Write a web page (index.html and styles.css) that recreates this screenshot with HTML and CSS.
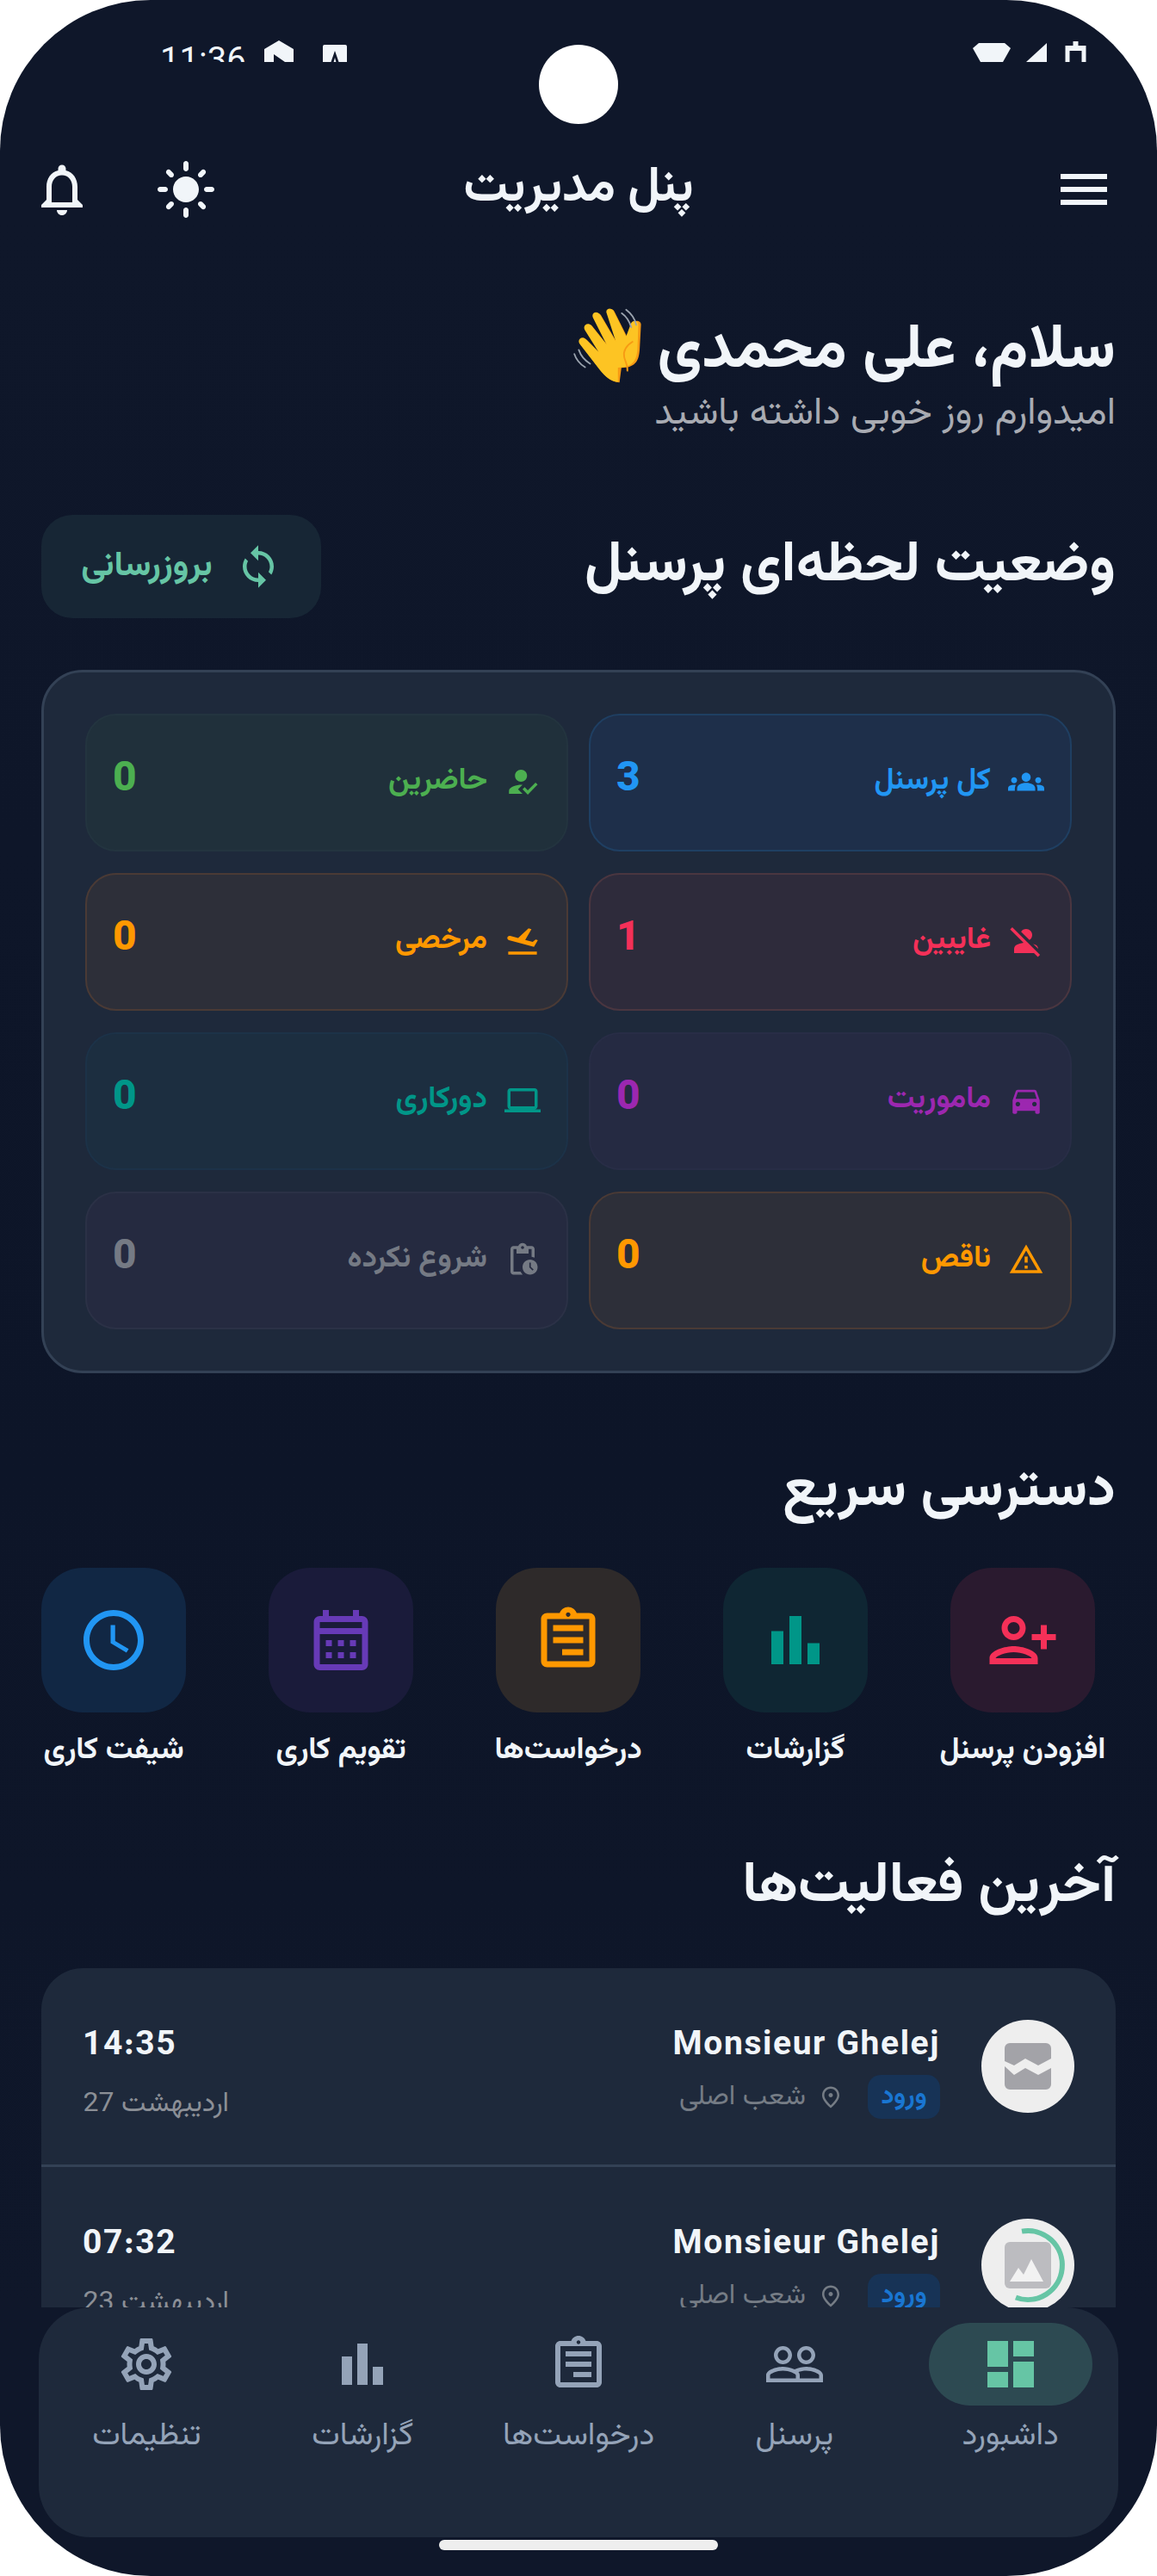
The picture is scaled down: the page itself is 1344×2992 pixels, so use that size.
FILE: index.html
```html
<!DOCTYPE html>
<html lang="fa" dir="rtl">
<head>
  <meta charset="UTF-8" />
  <title>پنل مدیریت</title>
  <link rel="stylesheet" href="styles.css">
</head>
<body>

<svg class="sprite" xmlns="http://www.w3.org/2000/svg">
  <symbol id="i-bell" viewBox="0 0 24 24"><path d="M12 22c1.1 0 2-.9 2-2h-4c0 1.1.89 2 2 2zm6-6v-5c0-3.07-1.64-5.64-4.5-6.32V4c0-.83-.67-1.5-1.5-1.5s-1.5.67-1.5 1.5v.68C7.63 5.36 6 7.92 6 11v5l-2 2v1h16v-1l-2-2zm-2 1H8v-6c0-2.48 1.51-4.5 4-4.5s4 2.02 4 4.5v6z"/></symbol>
  <symbol id="i-sun" viewBox="0 0 24 24"><path d="M12 7c-2.76 0-5 2.24-5 5s2.24 5 5 5 5-2.24 5-5-2.24-5-5-5zM2 13h2c.55 0 1-.45 1-1s-.45-1-1-1H2c-.55 0-1 .45-1 1s.45 1 1 1zm18 0h2c.55 0 1-.45 1-1s-.45-1-1-1h-2c-.55 0-1 .45-1 1s.45 1 1 1zM11 2v2c0 .55.45 1 1 1s1-.45 1-1V2c0-.55-.45-1-1-1s-1 .45-1 1zm0 18v2c0 .55.45 1 1 1s1-.45 1-1v-2c0-.55-.45-1-1-1s-1 .45-1 1zM5.99 4.58c-.39-.39-1.03-.39-1.41 0-.39.39-.39 1.03 0 1.41l1.06 1.06c.39.39 1.03.39 1.41 0s.39-1.03 0-1.41L5.99 4.58zm12.37 12.37c-.39-.39-1.03-.39-1.41 0-.39.39-.39 1.03 0 1.41l1.06 1.06c.39.39 1.03.39 1.41 0 .39-.39.39-1.03 0-1.41l-1.06-1.06zm1.06-10.96c.39-.39.39-1.03 0-1.41-.39-.39-1.03-.39-1.41 0l-1.06 1.06c-.39.39-.39 1.03 0 1.41s1.03.39 1.41 0l1.06-1.06zM7.05 18.36c.39-.39.39-1.03 0-1.41-.39-.39-1.03-.39-1.41 0l-1.06 1.06c-.39.39-.39 1.03 0 1.41s1.03.39 1.41 0l1.06-1.06z"/></symbol>
  <symbol id="i-menu" viewBox="0 0 24 24"><path d="M3 18h18v-2H3v2zm0-5h18v-2H3v2zm0-7v2h18V6H3z"/></symbol>
  <symbol id="i-sync" viewBox="0 0 24 24"><path d="M12 4V1L8 5l4 4V6c3.31 0 6 2.69 6 6 0 1.01-.25 1.97-.7 2.8l1.46 1.46C19.54 15.03 20 13.57 20 12c0-4.42-3.58-8-8-8zm0 14c-3.31 0-6-2.69-6-6 0-1.01.25-1.97.7-2.8L5.24 7.74C4.46 8.97 4 10.43 4 12c0 4.42 3.58 8 8 8v3l4-4-4-4v3z"/></symbol>
  <symbol id="i-groups" viewBox="0 0 24 24"><path d="M12 12.75c1.63 0 3.07.39 4.24.9 1.08.48 1.76 1.56 1.76 2.73V18H6v-1.61c0-1.18.68-2.26 1.76-2.73 1.17-.52 2.61-.91 4.24-.91zM4 13c1.1 0 2-.9 2-2s-.9-2-2-2-2 .9-2 2 .9 2 2 2zm1.13 1.1c-.37-.06-.74-.1-1.13-.1-.99 0-1.93.21-2.78.58C.48 14.9 0 15.62 0 16.43V18h4.5v-1.61c0-.83.23-1.61.63-2.29zM20 13c1.1 0 2-.9 2-2s-.9-2-2-2-2 .9-2 2 .9 2 2 2zm4 3.43c0-.81-.48-1.53-1.22-1.85-.85-.37-1.79-.58-2.78-.58-.39 0-.76.04-1.13.1.4.68.63 1.46.63 2.29V18H24v-1.57zM12 6c1.66 0 3 1.34 3 3s-1.34 3-3 3-3-1.34-3-3 1.34-3 3-3z"/></symbol>
  <symbol id="i-present" viewBox="0 0 24 24"><path d="M9 17l3-2.94c-.39-.04-.68-.06-1-.06-2.67 0-8 1.34-8 4v2h9l-3-3zm2-5c2.21 0 4-1.79 4-4s-1.79-4-4-4-4 1.79-4 4 1.79 4 4 4zm4.47 8.5L12 17l1.4-1.41 2.07 2.08 5.13-5.17 1.4 1.41z"/></symbol>
  <symbol id="i-takeoff" viewBox="0 0 24 24"><path d="M2.5 19h19v2h-19v-2zm19.57-9.36c-.21-.8-1.04-1.28-1.84-1.06L14.92 10l-6.9-6.43-1.93.51 4.14 7.17-4.97 1.33-1.97-1.54-1.45.39 2.59 4.49 16.57-4.43c.81-.23 1.28-1.05 1.07-1.85z"/></symbol>
  <symbol id="i-person-off" viewBox="0 0 24 24"><path d="M8.65 5.82C9.36 4.72 10.6 4 12 4c2.21 0 4 1.79 4 4 0 1.4-.72 2.64-1.82 3.35L8.65 5.82zM20 17.17c-.02-1.1-.63-2.11-1.61-2.62-.54-.28-1.13-.54-1.77-.76L20 17.17zm1.19 4.02L2.81 2.81 1.39 4.22l8.89 8.89c-1.81.23-3.39.79-4.67 1.45C4.61 15.07 4 16.1 4 17.22V20h13.17l2.61 2.61 1.41-1.42z"/></symbol>
  <symbol id="i-car" viewBox="0 0 24 24"><path d="M18.92 6.01C18.72 5.42 18.16 5 17.5 5h-11c-.66 0-1.21.42-1.42 1.01L3 12v8c0 .55.45 1 1 1h1c.55 0 1-.45 1-1v-1h12v1c0 .55.45 1 1 1h1c.55 0 1-.45 1-1v-8l-2.08-5.99zM6.5 16c-.83 0-1.5-.67-1.5-1.5S5.67 13 6.5 13s1.5.67 1.5 1.5S7.33 16 6.5 16zm11 0c-.83 0-1.5-.67-1.5-1.5s.67-1.5 1.5-1.5 1.5.67 1.5 1.5-.67 1.5-1.5 1.5zM5 11l1.5-4.5h11L19 11H5z"/></symbol>
  <symbol id="i-laptop" viewBox="0 0 24 24"><path d="M20 18c1.1 0 1.99-.9 1.99-2L22 6c0-1.1-.9-2-2-2H4c-1.1 0-2 .9-2 2v10c0 1.1.9 2 2 2H0v2h24v-2h-4zM4 6h16v10H4V6z"/></symbol>
  <symbol id="i-warning" viewBox="0 0 24 24"><path d="M12 5.99L19.53 19H4.47L12 5.99M12 2L1 21h22L12 2zm1 14h-2v2h2v-2zm0-6h-2v4h2v-4z"/></symbol>
  <symbol id="i-pending" viewBox="0 0 24 24"><path d="M17 12c-2.76 0-5 2.24-5 5s2.24 5 5 5 5-2.24 5-5-2.24-5-5-5zm1.65 7.35L16.5 17.2V14h1v2.79l1.85 1.85-.7.71zM18 3h-3.18C14.4 1.84 13.3 1 12 1s-2.4.84-2.82 2H6c-1.1 0-2 .9-2 2v15c0 1.1.9 2 2 2h6.11c-.59-.57-1.07-1.25-1.42-2H6V5h2v3h8V5h2v5.08c.71.1 1.38.31 2 .6V5c0-1.1-.9-2-2-2zm-6 2c-.55 0-1-.45-1-1s.45-1 1-1 1 .45 1 1-.45 1-1 1z"/></symbol>
  <symbol id="i-add" viewBox="0 0 24 24"><path d="M13 8c0-2.21-1.79-4-4-4S5 5.79 5 8s1.79 4 4 4 4-1.79 4-4zm-2 0c0 1.1-.9 2-2 2s-2-.9-2-2 .9-2 2-2 2 .9 2 2zM1 18v2h16v-2c0-2.66-5.33-4-8-4s-8 1.34-8 4zm2 0c.2-.71 3.3-2 6-2 2.69 0 5.77 1.28 6 2H3zm17-3v-3h3v-2h-3V7h-2v3h-3v2h3v3h2z"/></symbol>
  <symbol id="i-bars" viewBox="0 0 24 24"><path d="M4 9h4v11H4zm6-5h4v16h-4zm6 9h4v7h-4z"/></symbol>
  <symbol id="i-assign" viewBox="0 0 24 24"><path d="M19 3h-4.18C14.4 1.84 13.3 1 12 1s-2.4.84-2.82 2H5c-1.1 0-2 .9-2 2v14c0 1.1.9 2 2 2h14c1.1 0 2-.9 2-2V5c0-1.1-.9-2-2-2zm-7-.25c.41 0 .75.34.75.75s-.34.75-.75.75-.75-.34-.75-.75.34-.75.75-.75zM19 19H5V5h14v14zM7 7h10v2H7zm0 4h10v2H7zm3 4h7v2h-7z"/></symbol>
  <symbol id="i-calendar" viewBox="0 0 24 24"><path d="M19 4h-1V2h-2v2H8V2H6v2H5c-1.1 0-1.99.9-1.99 2L3 20c0 1.1.9 2 2 2h14c1.1 0 2-.9 2-2V6c0-1.1-.9-2-2-2zm0 16H5V10h14v10zm0-12H5V6h14v2zM9 14H7v-2h2v2zm4 0h-2v-2h2v2zm4 0h-2v-2h2v2zm-8 4H7v-2h2v2zm4 0h-2v-2h2v2zm4 0h-2v-2h2v2z"/></symbol>
  <symbol id="i-clock" viewBox="0 0 24 24"><path d="M11.99 2C6.47 2 2 6.48 2 12s4.47 10 9.99 10C17.52 22 22 17.52 22 12S17.52 2 11.99 2zM12 20c-4.42 0-8-3.58-8-8s3.58-8 8-8 8 3.58 8 8-3.58 8-8 8zm.5-13H11v6l5.25 3.15.75-1.23-4.5-2.67z"/></symbol>
  <symbol id="i-dash" viewBox="0 0 24 24"><path d="M3 13h8V3H3v10zm0 8h8v-6H3v6zm10 0h8V11h-8v10zm0-18v6h8V3h-8z"/></symbol>
  <symbol id="i-people" viewBox="0 0 24 24"><path d="M16.5 13c-1.2 0-3.07.34-4.5 1-1.43-.67-3.3-1-4.5-1C5.33 13 1 14.08 1 16.25V19h22v-2.75c0-2.17-4.33-3.25-6.5-3.25zm-4 4.5h-10v-1.25c0-.54 2.56-1.75 5-1.75s5 1.21 5 1.75v1.25zm9 0H14v-1.25c0-.46-.2-.86-.52-1.22.88-.3 1.96-.53 3.02-.53 2.44 0 5 1.21 5 1.75v1.25zM7.5 12c1.93 0 3.5-1.57 3.5-3.5S9.43 5 7.5 5 4 6.57 4 8.5 5.57 12 7.5 12zm0-5.5c1.1 0 2 .9 2 2s-.9 2-2 2-2-.9-2-2 .9-2 2-2zm9 5.5c1.93 0 3.5-1.57 3.5-3.5S18.43 5 16.5 5 13 6.57 13 8.5s1.57 3.5 3.5 3.5zm0-5.5c1.1 0 2 .9 2 2s-.9 2-2 2-2-.9-2-2 .9-2 2-2z"/></symbol>
  <symbol id="i-gear" viewBox="0 0 24 24"><path d="M19.43 12.98c.04-.32.07-.64.07-.98 0-.34-.03-.66-.07-.98l2.11-1.65c.19-.15.24-.42.12-.64l-2-3.46c-.09-.16-.26-.25-.44-.25-.06 0-.12.01-.17.03l-2.49 1c-.52-.4-1.08-.73-1.69-.98l-.38-2.65C14.46 2.18 14.25 2 14 2h-4c-.25 0-.46.18-.49.42l-.38 2.65c-.61.25-1.17.59-1.69.98l-2.49-1c-.06-.02-.12-.03-.18-.03-.17 0-.34.09-.43.25l-2 3.46c-.13.22-.07.49.12.64l2.11 1.65c-.04.32-.07.65-.07.98 0 .33.03.66.07.98l-2.11 1.65c-.19.15-.24.42-.12.64l2 3.46c.09.16.26.25.44.25.06 0 .12-.01.17-.03l2.49-1c.52.4 1.08.73 1.69.98l.38 2.65c.03.24.24.42.49.42h4c.25 0 .46-.18.49-.42l.38-2.65c.61-.25 1.17-.59 1.69-.98l2.49 1c.06.02.12.03.18.03.17 0 .34-.09.43-.25l2-3.46c.12-.22.07-.49-.12-.64l-2.11-1.65zm-1.98-1.71c.04.31.05.52.05.73 0 .21-.02.43-.05.73l-.14 1.13.89.7 1.08.84-.7 1.21-1.27-.51-1.04-.42-.9.68c-.43.32-.84.56-1.25.73l-1.06.43-.16 1.13-.2 1.35h-1.4l-.19-1.35-.16-1.13-1.06-.43c-.43-.18-.83-.41-1.23-.71l-.91-.7-1.06.43-1.27.51-.7-1.21 1.08-.84.89-.7-.14-1.13c-.03-.31-.05-.54-.05-.74s.02-.43.05-.73l.14-1.13-.89-.7-1.08-.84.7-1.21 1.27.51 1.04.42.9-.68c.43-.32.84-.56 1.25-.73l1.06-.43.16-1.13.2-1.35h1.39l.19 1.35.16 1.13 1.06.43c.43.18.83.41 1.23.71l.91.7 1.06-.43 1.27-.51.7 1.21-1.07.85-.89.7.14 1.13zM12 8c-2.21 0-4 1.79-4 4s1.79 4 4 4 4-1.79 4-4-1.79-4-4-4zm0 6c-1.1 0-2-.9-2-2s.9-2 2-2 2 .9 2 2-.9 2-2 2z"/></symbol>
  <symbol id="i-pin" viewBox="0 0 24 24"><path d="M12 12c-1.1 0-2-.9-2-2s.9-2 2-2 2 .9 2 2-.9 2-2 2zm6-1.8C18 6.57 15.35 4 12 4s-6 2.57-6 6.2c0 2.34 1.95 5.44 6 9.14 4.05-3.7 6-6.8 6-9.14zM12 2c4.2 0 8 3.22 8 8.2 0 3.32-2.67 7.25-8 11.8-5.33-4.55-8-8.48-8-11.8C4 5.22 7.8 2 12 2z"/></symbol>
</svg>

<div class="phone">
  <div class="status">
    <div class="status-left">
      <span class="clock">11:36</span>
      <svg class="st-play" viewBox="0 0 34 40"><path fill-rule="evenodd" d="M0 10L17 0l17 10v30H0zM11 16v18l13-9z"/></svg>
      <svg class="st-a" viewBox="0 0 28 40"><path fill-rule="evenodd" d="M2 0h24a2 2 0 0 1 2 2v38H0V2a2 2 0 0 1 2-2zM14 7L6 30h16zM14 15l3 11h-6z"/></svg>
    </div>
    <div class="status-right">
      <svg class="st-wifi" viewBox="0 0 44 22"><path d="M0 6L7 0h30l7 6-9 16H9z"/></svg>
      <svg class="st-signal" viewBox="0 0 24 22"><path d="M24 0v22H0z"/></svg>
      <svg class="st-batt" viewBox="0 0 24 40"><path d="M9 0h6v5h9v35h-5V11H5v29H0V5h9z"/></svg>
    </div>
  </div>
  <div class="camera"></div>

  <header class="topbar">
    <button class="icon-btn"><svg class="ico72"><use href="#i-menu"/></svg></button>
    <h1 class="page-title">پنل مدیریت</h1>
    <div class="topbar-left">
      <button class="icon-btn"><svg class="ico72"><use href="#i-sun"/></svg></button>
      <button class="icon-btn"><svg class="ico72"><use href="#i-bell"/></svg></button>
    </div>
  </header>

  <main class="content">
    <section class="hello">
      <h2 class="hello-name">سلام، علی محمدی
        <svg class="wave" viewBox="66 60 240 240">
          <path d="M215 295C185 293 165 270 150 250L92 175c-10-14 8-28 20-14l40 40-44-70c-8-15 10-26 21-14l48 60-43-85c-7-16 13-24 22-10l50 85-29-90c-5-14 15-20 22-6l40 80 18-42c6-14 28-10 26 5l-4 75c-2 30-8 60-58 60z" fill="#f79a14"/>
          <path d="M210 293C182 291 162 268 147 248L89 173c-10-14 8-28 20-14l40 40-44-70c-8-15 10-26 21-14l48 60-43-85c-7-16 13-24 22-10l50 85-29-90c-5-14 15-20 22-6l40 80 15-40c6-14 25-10 24 4l-3 75c-2 30-10 60-62 60z" fill="#fdc423"/>
          <path d="M258 165c-20 12-32 30-28 50 3 15 12 25 10 45" fill="none" stroke="#f79a14" stroke-width="5"/>
          <path d="M222 76c14 10 24 24 30 44M236 65c16 12 28 28 32 48M72 205c6 18 18 32 34 42M86 192c6 18 20 34 36 44" fill="none" stroke="#9aa3ae" stroke-width="5" stroke-linecap="round"/>
        </svg>
      </h2>
      <p class="hello-sub">امیدوارم روز خوبی داشته باشید</p>
    </section>

    <div class="section-row">
      <h2 class="section-title">وضعیت لحظه‌ای پرسنل</h2>
      <button class="refresh"><svg class="ico54"><use href="#i-sync"/></svg>بروزرسانی</button>
    </div>

    <section class="panel">
      <div class="tile tile-blue"><div class="tile-label"><svg class="ico42"><use href="#i-groups"/></svg>کل پرسنل</div><div class="tile-num">3</div></div>
      <div class="tile tile-green"><div class="tile-label"><svg class="ico42"><use href="#i-present"/></svg>حاضرین</div><div class="tile-num">0</div></div>
      <div class="tile tile-red"><div class="tile-label"><svg class="ico42"><use href="#i-person-off"/></svg>غایبین</div><div class="tile-num">1</div></div>
      <div class="tile tile-orange"><div class="tile-label"><svg class="ico42 flip"><use href="#i-takeoff"/></svg>مرخصی</div><div class="tile-num">0</div></div>
      <div class="tile tile-purple"><div class="tile-label"><svg class="ico42"><use href="#i-car"/></svg>ماموریت</div><div class="tile-num">0</div></div>
      <div class="tile tile-teal"><div class="tile-label"><svg class="ico42"><use href="#i-laptop"/></svg>دورکاری</div><div class="tile-num">0</div></div>
      <div class="tile tile-amber"><div class="tile-label"><svg class="ico42"><use href="#i-warning"/></svg>ناقص</div><div class="tile-num">0</div></div>
      <div class="tile tile-gray"><div class="tile-label"><svg class="ico42"><use href="#i-pending"/></svg>شروع نکرده</div><div class="tile-num">0</div></div>
    </section>

    <h2 class="section-title quick-title">دسترسی سریع</h2>
    <section class="quick">
      <div class="quick-item"><div class="quick-box q-pink"><svg class="ico84"><use href="#i-add"/></svg></div><span>افزودن پرسنل</span></div>
      <div class="quick-item"><div class="quick-box q-teal"><svg class="ico84"><use href="#i-bars"/></svg></div><span>گزارشات</span></div>
      <div class="quick-item"><div class="quick-box q-orange"><svg class="ico84"><use href="#i-assign"/></svg></div><span>درخواست‌ها</span></div>
      <div class="quick-item"><div class="quick-box q-purple"><svg class="ico84"><use href="#i-calendar"/></svg></div><span>تقویم کاری</span></div>
      <div class="quick-item"><div class="quick-box q-blue"><svg class="ico84"><use href="#i-clock"/></svg></div><span>شیفت کاری</span></div>
    </section>

    <h2 class="section-title recent-title">آخرین فعالیت‌ها</h2>
    <section class="activity">
      <div class="act-row">
        <div class="avatar">
          <svg class="ico-img" viewBox="0 0 54 54"><path d="M6 0h42a6 6 0 0 1 6 6v12l-15 8-15-8-13 8-11-5V6a6 6 0 0 1 6-6zM0 27l11 10 13-8 15 8 15-8v19a6 6 0 0 1-6 6H6a6 6 0 0 1-6-6z" fill="#a3a3a8"/></svg>
        </div>
        <div class="act-main">
          <div class="act-name">Monsieur Ghelej</div>
          <div class="act-meta"><span class="chip">ورود</span><svg class="ico30"><use href="#i-pin"/></svg><span>شعب اصلی</span></div>
        </div>
        <div class="act-time">
          <div class="act-clock">14:35</div>
          <div class="act-date">اردیبهشت 27</div>
        </div>
      </div>
      <div class="act-row">
        <div class="avatar">
          <svg class="ico-img" viewBox="0 0 54 54"><rect width="54" height="54" rx="6" fill="#bcbcc0"/><path d="M6 46l10-16 6 8 9-18 14 26z" fill="#f2f2f2"/></svg>
          <svg class="spinner" viewBox="0 0 108 108"><path d="M47 14.6a40 40 0 1 1-7 76.9" fill="none" stroke="#66c5a5" stroke-width="6"/></svg>
        </div>
        <div class="act-main">
          <div class="act-name">Monsieur Ghelej</div>
          <div class="act-meta"><span class="chip">ورود</span><svg class="ico30"><use href="#i-pin"/></svg><span>شعب اصلی</span></div>
        </div>
        <div class="act-time">
          <div class="act-clock">07:32</div>
          <div class="act-date">اردیبهشت 23</div>
        </div>
      </div>
    </section>
  </main>

  <nav class="bottom-nav">
    <div class="nav-item active"><div class="nav-pill"><svg class="ico72"><use href="#i-dash"/></svg></div><span>داشبورد</span></div>
    <div class="nav-item"><div class="nav-pill"><svg class="ico72"><use href="#i-people"/></svg></div><span>پرسنل</span></div>
    <div class="nav-item"><div class="nav-pill"><svg class="ico72"><use href="#i-assign"/></svg></div><span>درخواست‌ها</span></div>
    <div class="nav-item"><div class="nav-pill"><svg class="ico72"><use href="#i-bars"/></svg></div><span>گزارشات</span></div>
    <div class="nav-item"><div class="nav-pill"><svg class="ico72"><use href="#i-gear"/></svg></div><span>تنظیمات</span></div>
  </nav>
  <div class="home-bar"></div>
</div>

</body>
</html>
```

FILE: styles.css
```css
* { box-sizing: border-box; }
html, body { margin: 0; padding: 0; background: #fff; }
body { width: 1344px; height: 2992px; overflow: hidden; font-family: "Vazirmatn", "Noto Sans", sans-serif; }
.sprite { display: none; }

.phone {
  position: relative;
  width: 1344px;
  height: 2992px;
  background: #0f172a;
  border-radius: 175px;
  overflow: hidden;
  display: flex;
  flex-direction: column;
  color: #f1f5f9;
}

svg { fill: currentColor; flex: none; display: block; }
.ico72 { width: 72px; height: 72px; }
.ico54 { width: 54px; height: 54px; }
.ico42 { width: 42px; height: 42px; }
.ico84 { width: 84px; height: 84px; }
.ico30 { width: 30px; height: 30px; }
.flip { transform: scaleX(-1); }

/* status bar is cut off at the bottom in the capture */
.status {
  height: 72px;
  padding: 47px 0 0;
  overflow: hidden;
  display: flex;
  direction: ltr;
  justify-content: space-between;
  flex: none;
}
.status-left { display: flex; margin-left: 186px; align-items: flex-start; }
.clock { font: 40px/40px Roboto, sans-serif; margin-top: 3px; width: 121px; }
.st-play { width: 34px; height: 40px; }
.st-a { width: 28px; height: 40px; margin: 5px 0 0 34px; }
.status-right { display: flex; margin-right: 82px; align-items: flex-start; }
.st-wifi { width: 44px; height: 22px; margin: 3px 18px 0 0; }
.st-signal { width: 24px; height: 22px; margin: 3px 21px 0 0; }
.st-batt { width: 25px; height: 40px; margin-top: 1px; }
.camera {
  position: absolute;
  left: 626px;
  top: 52px;
  width: 92px;
  height: 92px;
  border-radius: 50%;
  background: #fff;
}

.topbar {
  flex: none;
  height: 72px;
  margin-top: 112px;
  padding: 0 49px 0 36px;
  display: flex;
  align-items: center;
  justify-content: space-between;
  position: relative;
}
.topbar-left { display: flex; gap: 72px; }
.icon-btn { background: none; border: 0; padding: 0; color: inherit; }
.page-title {
  position: absolute;
  left: 0;
  right: 0;
  margin: 0;
  text-align: center;
  font-size: 57px;
  line-height: 72px;
  font-weight: 700;
}

.content { flex: 1; min-height: 0; overflow: hidden; padding: 0 48px; background: linear-gradient(#0f172a, #0d1528 60%, #0f172a); }

.hello { margin-top: 107px; }
.hello-name { margin: 0; font-size: 72px; line-height: 92px; font-weight: 700; display: flex; align-items: center; gap: 10px; }
.wave { width: 88px; height: 88px; margin-top: -14px; }
.hello-sub { margin: 0; font-size: 44px; line-height: 53px; color: #a8abb2; }

.section-row { display: flex; align-items: center; justify-content: space-between; margin-top: 90px; }
.section-title { margin: 0; font-size: 66px; line-height: 84px; font-weight: 700; }
.refresh {
  width: 325px;
  height: 120px;
  display: flex;
  align-items: center;
  justify-content: center;
  gap: 26px;
  background: #172635;
  color: #66c5a5;
  border: 0;
  border-radius: 36px;
  font: 700 40px "Vazirmatn", sans-serif;
}

.panel {
  margin-top: 60px;
  padding: 48px;
  background: #1e293b;
  border: 3px solid #334155;
  border-radius: 48px;
  display: grid;
  grid-template-columns: 1fr 1fr;
  gap: 25px 24px;
}
.tile {
  height: 160px;
  padding: 52px 30px 0;
  border: 2px solid;
  border-radius: 36px;
  display: flex;
  align-items: flex-start;
  justify-content: space-between;
}
.tile-label { display: flex; align-items: center; gap: 20px; font-size: 35px; line-height: 48px; font-weight: 700; margin-top: 1px; }
.tile-num { font: 800 48px/48px "Vazirmatn", sans-serif; }
.tile-blue { background: #1e2f4a; border-color: #1f3f62; color: #2196f3; }
.tile-green { background: #20303b; border-color: #23343f; color: #4caf50; }
.tile-red { background: #2e2b3b; border-color: #4a3640; color: #f43058; }
.tile-orange { background: #2d2f39; border-color: #4a3a35; color: #ff9800; }
.tile-purple { background: #252a42; border-color: #282d46; color: #9c27b0; }
.tile-teal { background: #1c2e40; border-color: #1c3248; color: #009688; }
.tile-amber { background: #2d2f39; border-color: #4a3a35; color: #ff9800; }
.tile-gray { background: #252a40; border-color: #2b3146; color: #757a84; }

.quick-title { margin-top: 95px; }
.quick { display: flex; gap: 96px; margin: 47px 24px 0 0; }
.quick-item { width: 168px; display: flex; flex-direction: column; align-items: center; gap: 23px; }
.quick-item span { font-size: 35px; line-height: 44px; font-weight: 700; white-space: nowrap; }
.quick-box { width: 168px; height: 168px; border-radius: 48px; display: flex; align-items: center; justify-content: center; }
.q-pink { background: #2a1a2f; color: #f43058; }
.q-teal { background: #0f2633; color: #009688; }
.q-orange { background: #2e2a2a; color: #ff9800; }
.q-purple { background: #1a1b3a; color: #673ab7; }
.q-blue { background: #112744; color: #2196f3; }

.recent-title { margin-top: 94px; }
.activity { margin-top: 52px; background: #1e293b; border-radius: 48px; }
.act-row { height: 231px; padding: 60px 48px 0; display: flex; gap: 48px; border-bottom: 3px solid #334155; }
.act-row:last-child { border-bottom: 0; }
.avatar { position: relative; width: 108px; height: 108px; border-radius: 50%; background: #eee; display: flex; align-items: center; justify-content: center; }
.ico-img { width: 54px; height: 54px; }
.spinner { position: absolute; left: 0; top: 0; width: 108px; height: 108px; }
.act-main { flex: 1; }
.act-name { direction: ltr; text-align: right; font: 700 39px/44px "Vazirmatn", sans-serif; letter-spacing: 1.6px; margin-top: 9px; }
.act-meta { display: flex; align-items: center; gap: 14px; margin-top: 11px; color: #757c85; font-size: 32px; }
.chip { background: #173356; color: #1976d2; font-size: 30px; font-weight: 700; height: 51px; width: 84px; border-radius: 15px; display: flex; align-items: center; justify-content: center; margin-left: 14px; }
.act-time { width: 170px; padding-top: 9px; }
.act-clock { direction: ltr; text-align: left; font: 700 39px/44px "Vazirmatn", sans-serif; letter-spacing: 1.6px; }
.act-date { margin-top: 20px; font-size: 32px; color: #8b8f96; white-space: nowrap; }

.bottom-nav {
  flex: none;
  height: 267px;
  margin: 0 45px;
  background: #1e293b;
  border-radius: 60px;
  display: flex;
  padding-top: 18px;
}
.nav-item { flex: 1; display: flex; flex-direction: column; align-items: center; color: #94a3b8; font-size: 37px; line-height: 48px; }
.nav-pill { width: 190px; height: 96px; border-radius: 48px; display: flex; align-items: center; justify-content: center; margin-bottom: 12px; }
.active .nav-pill { background: #2d4a52; color: #66c5a5; }
.home-bar { flex: none; width: 324px; height: 12px; margin: 3px auto 30px; border-radius: 6px; background: #eee; }
```
